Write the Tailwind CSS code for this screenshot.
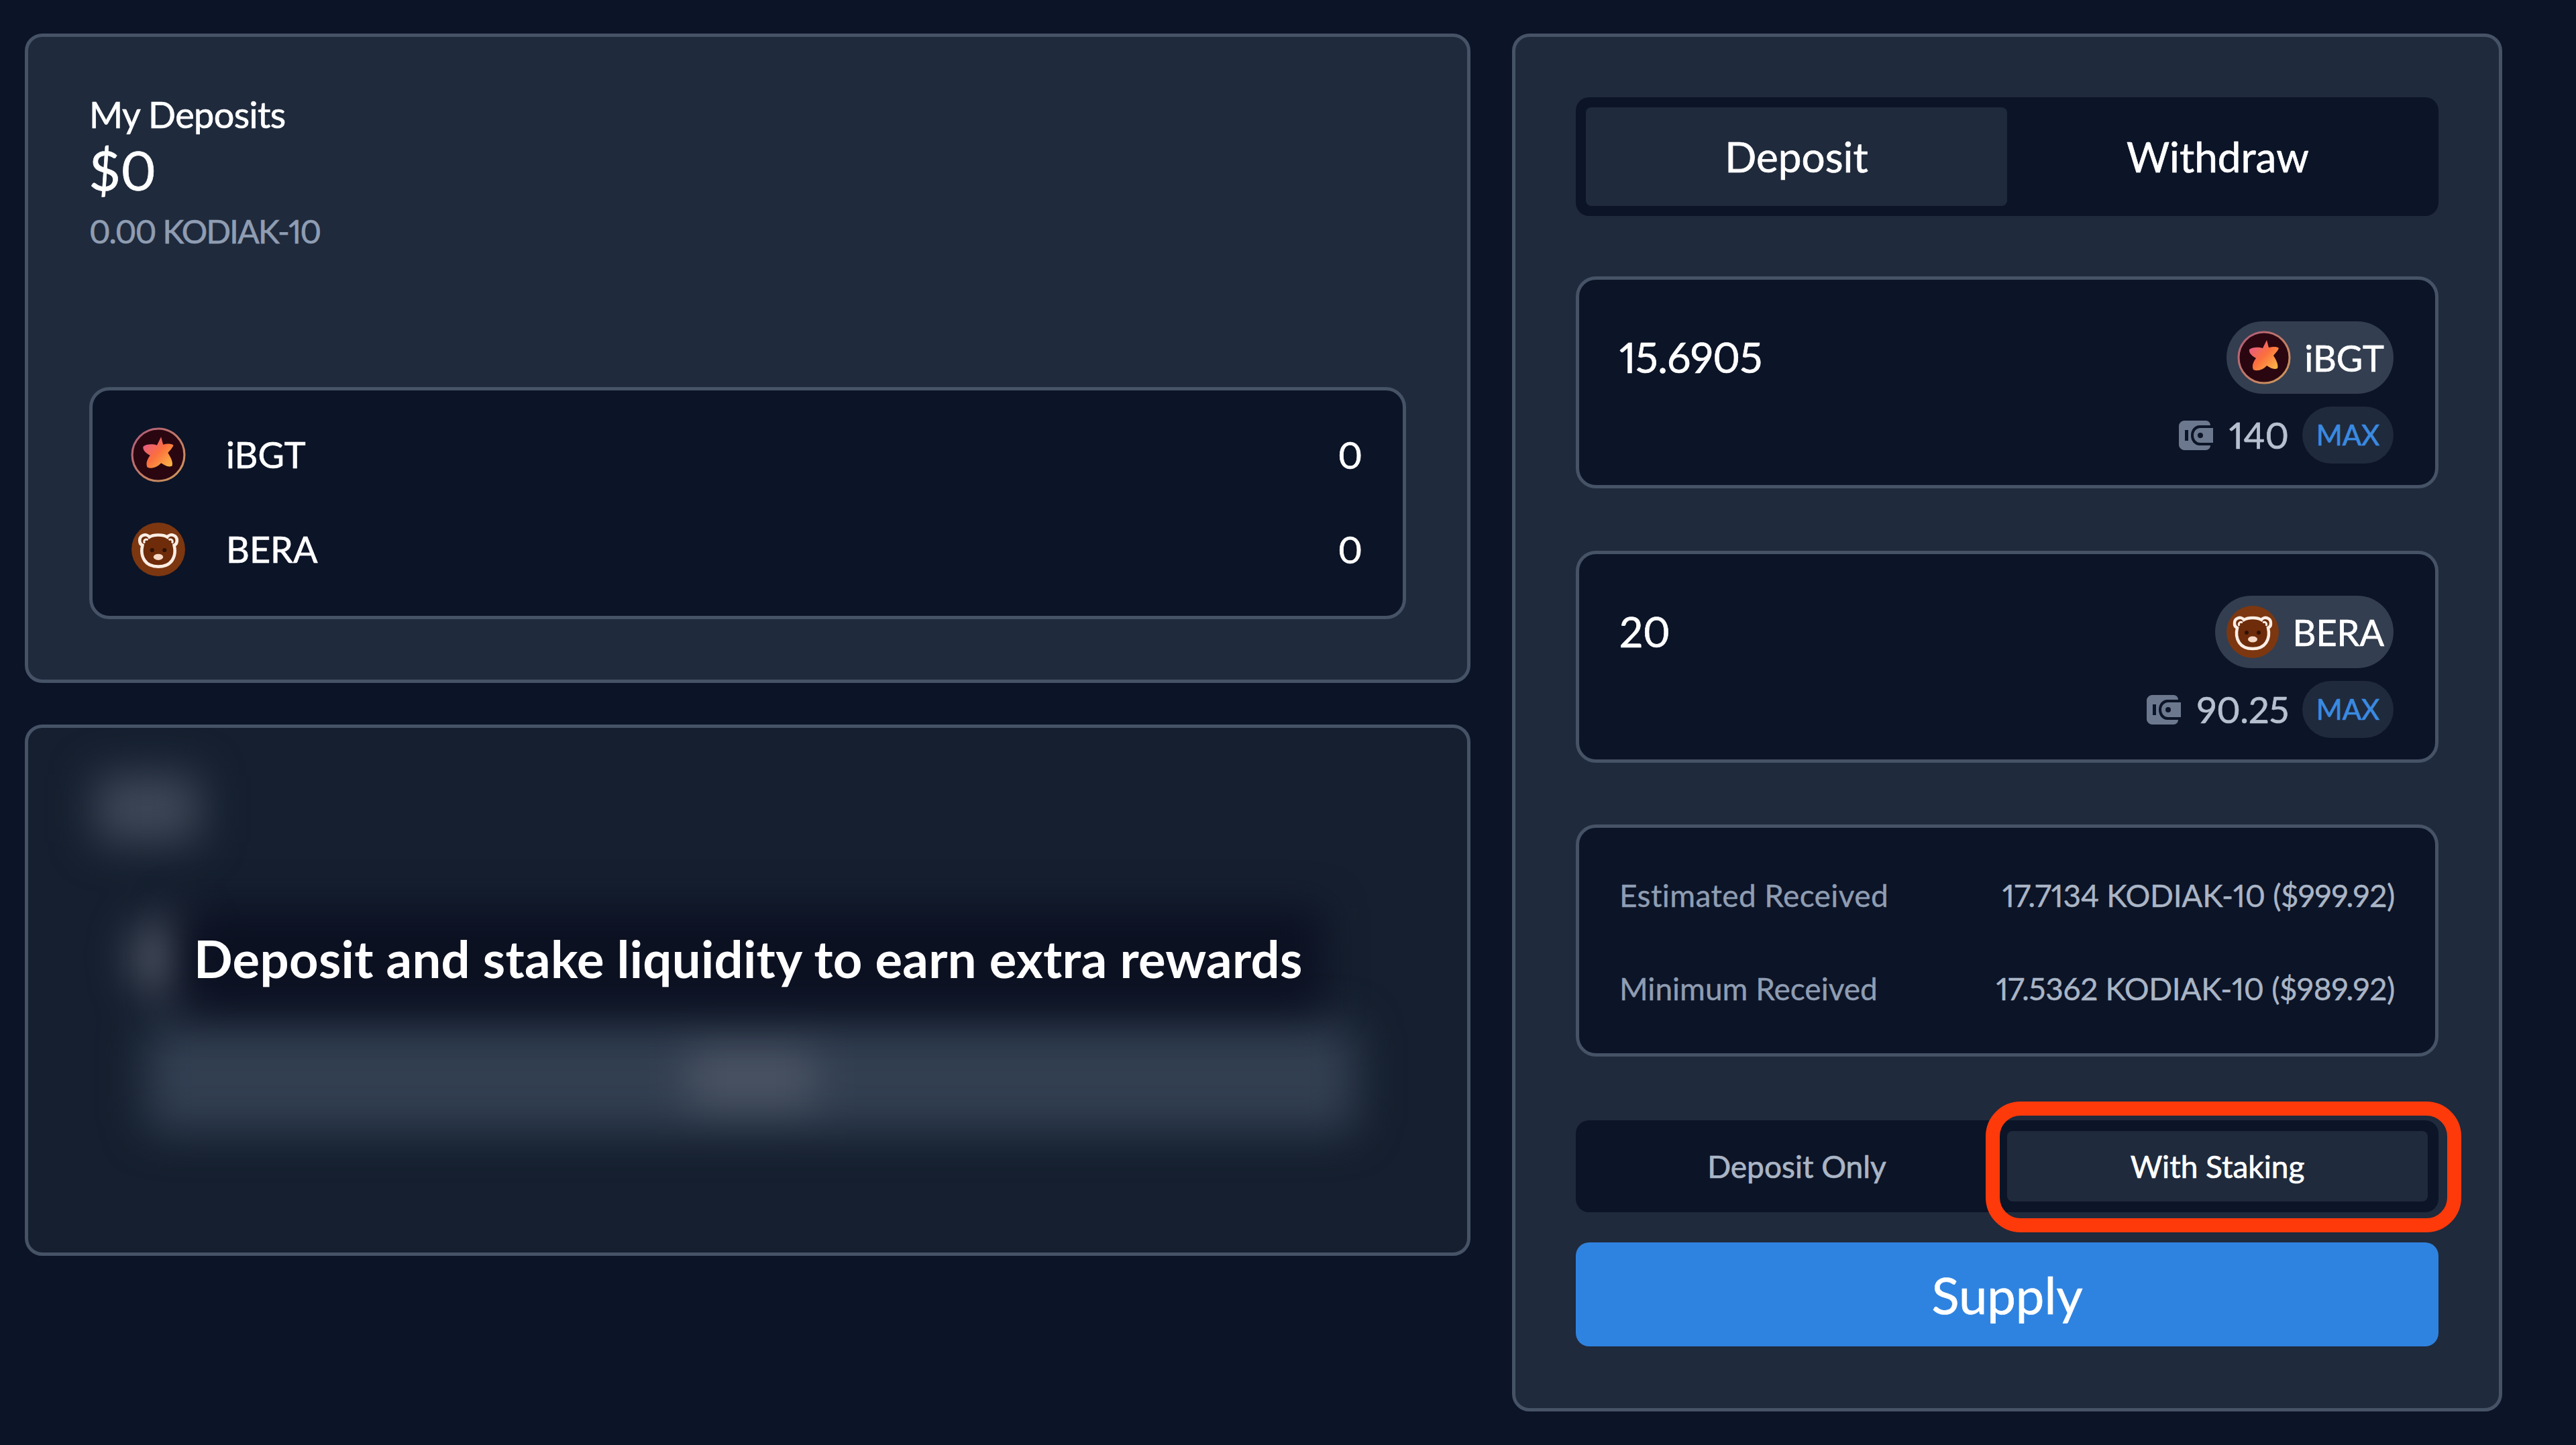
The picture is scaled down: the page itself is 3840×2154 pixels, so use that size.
<!DOCTYPE html>
<html lang="en">

<head>
    <meta charset="UTF-8">
    <meta name="viewport" content="width=device-width, initial-scale=1.0">
    <title>Kodiak Vault</title>
    <script src="https://cdn.jsdelivr.net/npm/@tailwindcss/browser@4"></script>
</head>

<body class="bg-[#0c1427] w-[3840px] h-[2154px] overflow-hidden font-['Lato',sans-serif] proportional-nums text-white [-webkit-text-stroke:0.7px]">

    <!-- shared icons -->
    <svg width="0" height="0" class="absolute">
        <defs>
            <linearGradient id="ringGrad" x1="0" y1="0" x2="1" y2="1">
                <stop offset="0" stop-color="#b0587a" />
                <stop offset="1" stop-color="#d09a58" />
            </linearGradient>
            <linearGradient id="starGrad" x1="0" y1="0" x2="1" y2="1">
                <stop offset="0" stop-color="#e0559f" />
                <stop offset="0.5" stop-color="#fb6f3d" />
                <stop offset="1" stop-color="#fbc34a" />
            </linearGradient>
            <symbol id="ibgt" viewBox="0 0 80 80">
                <circle cx="40" cy="40" r="38" fill="#2a0710" stroke="url(#ringGrad)" stroke-width="3" />
                <path d="M44 14 L47 25 C52 24 59 23 62 26 C60 31 56 34 54 37 C57 42 62 50 60 56 C55 59 49 55 44 52 C39 58 30 61 24 58 C21 52 25 45 28 41 C23 38 17 34 18 28 C23 24 32 24 38 26 C40 22 42 18 44 14 Z" fill="url(#starGrad)" />
            </symbol>
            <symbol id="bera" viewBox="0 0 80 80">
                <circle cx="40" cy="40" r="39" fill="#7c3710" />
                <path d="M40 19 C45 19 50 20 53 22 C57 16 68 19 67 28 C67 31 65 33 63 34 C65 42 64 50 60 56 C56 62 48 65 40 65 C32 65 24 62 20 56 C16 50 15 42 17 34 C15 33 13 31 13 28 C12 19 23 16 27 22 C30 20 35 19 40 19 Z" fill="#6e2c0a" stroke="#fbeee4" stroke-width="4.5" />
                <path d="M20 31 C18 27 21 24 25 26 M60 31 C62 27 59 24 55 26" fill="none" stroke="#fbeee4" stroke-width="3" />
                <circle cx="31" cy="41" r="3" fill="#2e1205" />
                <circle cx="49" cy="41" r="3" fill="#2e1205" />
                <ellipse cx="40" cy="51" rx="7" ry="4.5" fill="#f6d9c6" />
            </symbol>
            <symbol id="wallet" viewBox="0 0 51 44">
                <path d="M8 0 H40 C44 0 47 3 47 7 H31 C23 7 18 14 18 22 C18 30 23 37 31 37 H47 C47 41 44 44 40 44 H8 C4 44 0 40 0 36 V8 C0 4 4 0 8 0 Z M9 14 V30 H14 V14 Z" fill="#6b788e" fill-rule="evenodd" />
                <path d="M32 11 H51 V33 H32 C26 33 22 28 22 22 C22 16 26 11 32 11 Z M32 18 A4 4 0 1 0 32 26 A4 4 0 1 0 32 18 Z" fill="#6b788e" fill-rule="evenodd" />
            </symbol>
        </defs>
    </svg>

    <div class="flex items-start pl-[37px] pt-[50px] gap-[62px]">

        <!-- Left column -->
        <div class="w-[2155px] flex flex-col gap-[62px]">

            <!-- My deposits -->
            <div class="h-[968px] bg-[#1f2a3c] border-[5px] border-[#465266] rounded-[26px] px-[91px] pt-[81px]">
                <p class="text-[54px] leading-[70px] tracking-[-0.6px]">My Deposits</p>
                <p class="text-[82px] leading-[92px]">$0</p>
                <p class="text-[48px] leading-[60px] mt-[17px] tracking-[-1.6px] text-[#8f9db2]">0.00 KODIAK-10</p>

                <div class="mt-[202px] h-[346px] bg-[#0c1427] border-[5px] border-[#465266] rounded-[30px] pl-[57px] pr-[60px] pb-[4px] flex flex-col justify-center gap-[59px]">
                    <div class="flex items-center">
                        <svg class="w-[82px] h-[82px]"><use href="#ibgt" /></svg>
                        <span class="ml-[60px] text-[54px]">iBGT</span>
                        <span class="ml-auto text-[56px] leading-none">0</span>
                    </div>
                    <div class="flex items-center">
                        <svg class="w-[82px] h-[82px]"><use href="#bera" /></svg>
                        <span class="ml-[60px] text-[54px]">BERA</span>
                        <span class="ml-auto text-[56px] leading-none">0</span>
                    </div>
                </div>
            </div>

            <!-- Blurred rewards panel -->
            <div class="relative h-[792px] bg-[#151f2f] border-[5px] border-[#465266] rounded-[26px] overflow-hidden">
                <div class="blur-[32px] pl-[100px] pr-[165px] pt-[70px]">
                    <div class="w-[155px] h-[100px] bg-[#3f4858]"></div>
                    <div class="ml-[57px] mt-[117px] w-[95px] h-[110px] rounded-full bg-[#525967]"></div>
                    <div class="ml-[75px] mt-[45px] h-[160px] rounded-[20px] bg-[#323f51] flex justify-center items-center">
                        <div class="w-[190px] h-[90px] bg-[#4a5363]"></div>
                    </div>
                </div>
                <div class="absolute left-[247px] top-[298px]">
                    <div class="absolute -inset-x-[30px] -inset-y-[30px] bg-[#0c1122] blur-[30px]"></div>
                    <p class="relative text-[76px] leading-[92px] font-bold tracking-[0.3px] whitespace-nowrap [-webkit-text-stroke:0]">Deposit and stake liquidity to earn extra rewards</p>
                </div>
            </div>
        </div>

        <!-- Right column -->
        <div class="relative w-[1476px] h-[2054px] bg-[#1f2a3c] border-[5px] border-[#465266] rounded-[26px] px-[90px] pt-[90px]">

            <div class="h-[177px] bg-[#0c1427] rounded-[20px] p-[15px] flex text-[62px]">
                <div class="w-1/2 bg-[#1f2a3c] rounded-[8px] flex items-center justify-center">Deposit</div>
                <div class="w-1/2 flex items-center justify-center">Withdraw</div>
            </div>

            <!-- iBGT input -->
            <div class="mt-[90px] h-[316px] bg-[#0c1427] border-[5px] border-[#465266] rounded-[30px] pl-[60px] pr-[62px] pt-[62px] flex justify-between">
                <span class="text-[62px] leading-[120px] -mt-[7px] tracking-[-0.5px]">15.6905</span>
                <div class="flex flex-col items-end gap-[19px]">
                    <div class="h-[108px] rounded-full bg-[#333e50] pl-[16px] pr-[14px] flex items-center gap-[20px]">
                        <svg class="w-[80px] h-[80px]"><use href="#ibgt" /></svg>
                        <span class="text-[54px]">iBGT</span>
                    </div>
                    <div class="flex items-center">
                        <svg class="w-[51px] h-[44px]"><use href="#wallet" /></svg>
                        <span class="ml-[24px] text-[54px] text-[#b6c0cf]">140</span>
                        <span class="ml-[20px] w-[136px] h-[85px] rounded-full bg-[#1f2a3c] flex items-center justify-center text-[42px] text-[#3a8ae0]">MAX</span>
                    </div>
                </div>
            </div>

            <!-- BERA input -->
            <div class="mt-[93px] h-[316px] bg-[#0c1427] border-[5px] border-[#465266] rounded-[30px] pl-[60px] pr-[62px] pt-[62px] flex justify-between">
                <span class="text-[62px] leading-[120px] -mt-[7px]">20</span>
                <div class="flex flex-col items-end gap-[19px]">
                    <div class="h-[108px] rounded-full bg-[#333e50] pl-[16px] pr-[14px] flex items-center gap-[20px]">
                        <svg class="w-[80px] h-[80px]"><use href="#bera" /></svg>
                        <span class="text-[54px]">BERA</span>
                    </div>
                    <div class="flex items-center">
                        <svg class="w-[51px] h-[44px]"><use href="#wallet" /></svg>
                        <span class="ml-[24px] text-[54px] text-[#b6c0cf]">90.25</span>
                        <span class="ml-[20px] w-[136px] h-[85px] rounded-full bg-[#1f2a3c] flex items-center justify-center text-[42px] text-[#3a8ae0]">MAX</span>
                    </div>
                </div>
            </div>

            <!-- Received -->
            <div class="mt-[92px] h-[346px] bg-[#0c1427] border-[5px] border-[#465266] rounded-[30px] px-[60px] pt-[4px] flex flex-col justify-center gap-[79px] text-[46px] leading-[60px] text-[#8f9db2] [-webkit-text-stroke:0.4px]">
                <div class="flex justify-between">
                    <span class="tracking-[0.4px]">Estimated Received</span>
                    <span class="text-[#aab5c5] tracking-[-0.3px]">17.7134 KODIAK-10 ($999.92)</span>
                </div>
                <div class="flex justify-between">
                    <span>Minimum Received</span>
                    <span class="text-[#aab5c5] tracking-[-0.3px]">17.5362 KODIAK-10 ($989.92)</span>
                </div>
            </div>

            <!-- Mode switch -->
            <div class="mt-[95px] h-[137px] bg-[#0c1427] rounded-[20px] p-[16px] flex text-[46px]">
                <div class="w-1/2 flex items-center justify-center text-[#aab5c5]">Deposit Only</div>
                <div class="w-1/2 bg-[#1f2a3c] rounded-[8px] flex items-center justify-center">With Staking</div>
            </div>

            <button class="mt-[45px] w-full h-[155px] bg-[#2f83e0] rounded-[20px] text-[76px]">Supply</button>

            <!-- red annotation -->
            <div class="absolute left-[701px] top-[1587px] w-[709px] h-[195px] border-[21px] border-[#ff3a0a] rounded-[52px]"></div>
        </div>
    </div>

</body>

</html>
